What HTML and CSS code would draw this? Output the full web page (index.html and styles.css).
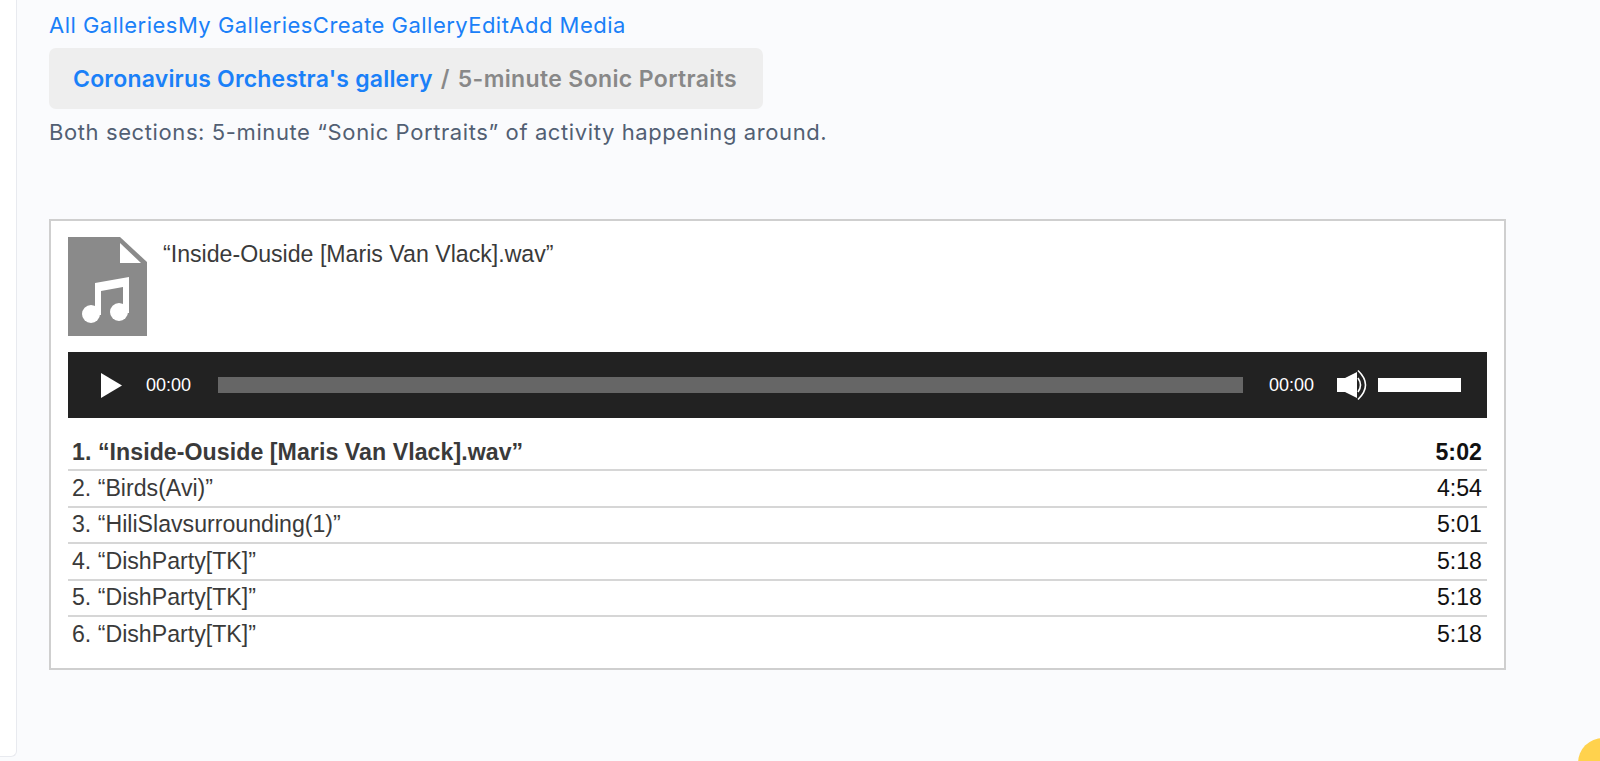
FILE: index.html
```html
<!DOCTYPE html>
<html lang="en">
<head>
<meta charset="utf-8">
<title>5-minute Sonic Portraits</title>
<link rel="stylesheet" href="styles.css">
</head>
<body>
<aside class="side"></aside>
<main class="main">
  <nav class="links"><a href="#">All Galleries</a><a href="#">My Galleries</a><a href="#">Create Gallery</a><a href="#">Edit</a><a href="#">Add Media</a></nav>
  <div class="crumb"><a href="#">Coronavirus Orchestra's gallery</a><span class="sep">/</span><span class="cur">5-minute Sonic Portraits</span></div>
  <p class="desc">Both sections: 5-minute “Sonic Portraits” of activity happening around.</p>
  <section class="card">
    <div class="now">
      <svg class="file" viewBox="0 0 79 99" aria-hidden="true">
        <path fill="#8a8a8a" d="M0 0H52L79 25V99H0Z"/>
        <path fill="#fff" d="M52 6V26H73Z"/>
        <g fill="#fff">
          <path d="M27 46L61 40V76H55V50L33 54V78H27Z"/>
          <circle cx="23" cy="77" r="9"/>
          <circle cx="51" cy="75" r="9"/>
        </g>
      </svg>
      <div class="now-title">“Inside-Ouside [Maris Van Vlack].wav”</div>
    </div>
    <div class="player">
      <svg class="play" viewBox="0 0 21 25" aria-hidden="true"><path fill="#fff" d="M0 0L21 12.500L0 25Z"/></svg>
      <span class="time t1">00:00</span>
      <div class="rail"></div>
      <span class="time t2">00:00</span>
      <svg class="vol" viewBox="0 0 30 32" aria-hidden="true">
        <path fill="#fff" d="M0 9H8L20 3V29L8 23H0Z"/>
        <path fill="none" stroke="#fff" stroke-width="1.600" d="M21 9Q26 16 21 23M21 1.500Q36 16 21 30.500"/>
      </svg>
      <div class="volbar"></div>
    </div>
    <ol class="tracks">
      <li class="track active"><span>1. “Inside-Ouside [Maris Van Vlack].wav”</span><span class="len">5:02</span></li>
      <li class="track"><span>2. “Birds(Avi)”</span><span class="len">4:54</span></li>
      <li class="track"><span>3. “HiliSlavsurrounding(1)”</span><span class="len">5:01</span></li>
      <li class="track"><span>4. “DishParty[TK]”</span><span class="len">5:18</span></li>
      <li class="track"><span>5. “DishParty[TK]”</span><span class="len">5:18</span></li>
      <li class="track"><span>6. “DishParty[TK]”</span><span class="len">5:18</span></li>
    </ol>
  </section>
</main>
<div class="blob"></div>
</body>
</html>
```
FILE: styles.css
```css
* { box-sizing: border-box; }
html, body { height: 100%; }
body {
  margin: 0;
  display: flex;
  align-items: flex-start;
  height: 761px;
  overflow: hidden;
  background: #fafbfd;
  font-family: Inter, "Liberation Sans", sans-serif;
}
.side {
  width: 17px;
  height: 757px;
  background: #fff;
  border-right: 1px solid #e8eaef;
  border-bottom: 1px solid #e8eaef;
  border-bottom-right-radius: 6px;
  flex: none;
}
.main {
  width: 1457px;
  margin-left: 32px;
  padding-top: 11px;
  flex: none;
}
a { color: #1a80f8; text-decoration: none; }
.links { height: 30px; line-height: 28px; font-size: 22px; letter-spacing: 0.480px; display: flex; }
.crumb {
  margin-top: 7px;
  width: 714px;
  height: 61px;
  padding: 0 24px;
  display: flex;
  align-items: center;
  white-space: nowrap;
  background: #eeeeee;
  border-radius: 7px;
  font-size: 23px;
  letter-spacing: 0.200px;
  font-weight: 600;
  color: #888;
}
.sep { margin: 0 8px; }
.cur { letter-spacing: 0.360px; }
.desc {
  margin: 9px 0 0;
  height: 28px;
  line-height: 28px;
  font-size: 22px;
  letter-spacing: 0.600px;
  color: #525f73;
}
.card {
  margin-top: 73px;
  height: 451px;
  padding: 16px 17px;
  background: #fff;
  border: 2px solid #cfcfcf;
  font-family: "Liberation Sans", Arial, sans-serif;
  color: #3a3a3a;
}
.now { display: flex; height: 99px; gap: 16px; }
.file { width: 79px; height: 99px; flex: none; }
.now-title { font-size: 23.150px; line-height: 34px; }
.player {
  margin-top: 16px;
  height: 66px;
  background: #222;
  display: flex;
  align-items: center;
  color: #fff;
}
.play { width: 21px; height: 25px; margin-left: 33px; flex: none; }
.time { font-size: 18px; line-height: 20px; width: 46px; flex: none; }
.t1 { margin-left: 24px; }
.rail { width: 1025px; height: 16px; margin-left: 26px; background: #666; flex: none; }
.t2 { margin-left: 26px; }
.vol { width: 30px; height: 32px; margin-left: 22px; flex: none; }
.volbar { width: 83px; height: 14px; margin-left: 11px; background: #fff; flex: none; }
.tracks { list-style: none; margin: 17px 0 0; padding: 0; }
.track {
  height: 36.400px;
  padding: 0 5px 0 4px;
  display: flex;
  justify-content: space-between;
  align-items: center;
  font-size: 23.150px;
  border-bottom: 2px solid #d6d6d6;
}
.track:last-child { border-bottom-color: transparent; }
.active { font-weight: 700; letter-spacing: 0.060px; }
.len { color: #111; }
.blob {
  position: absolute;
  left: 1578px;
  top: 738px;
  width: 50px;
  height: 50px;
  border-radius: 50%;
  background: #ffd24d;
}
```
